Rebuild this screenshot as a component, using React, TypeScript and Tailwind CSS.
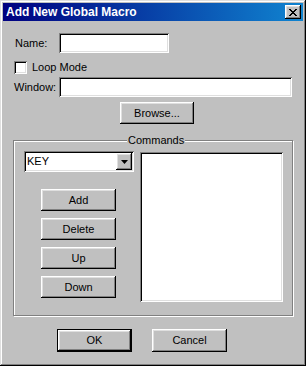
import React from "react";

const raised =
  "shadow-[inset_-1px_-1px_#000,inset_1px_1px_#fff,inset_-2px_-2px_#808080,inset_2px_2px_#dfdfdf]";
const sunken =
  "shadow-[inset_1px_1px_#808080,inset_-1px_-1px_#fff,inset_2px_2px_#000,inset_-2px_-2px_#dfdfdf]";

function Btn({ label, w = "w-[75px]", h = "h-[23px]", def = false }: { label: string; w?: string; h?: string; def?: boolean }) {
  if (def) {
    return (
      <div className={`${w} ${h} border border-black flex`}>
        <div className={`flex-1 bg-[#c0c0c0] flex items-center justify-center text-[11px] text-black ${raised}`}>{label}</div>
      </div>
    );
  }
  return (
    <div className={`${w} ${h} bg-[#c0c0c0] flex items-center justify-center text-[11px] text-black ${raised}`}>{label}</div>
  );
}

export default function App() {
  return (
    <div
      className="w-[306px] h-[366px] bg-[#c0c0c0] p-[3px] flex flex-col shadow-[inset_-1px_-1px_#000,inset_1px_1px_#dfdfdf,inset_-2px_-2px_#808080,inset_2px_2px_#fff]"
      style={{ fontFamily: '"Liberation Sans", Arial, sans-serif' }}
    >
      {/* Title bar */}
      <div className="h-[18px] bg-[linear-gradient(to_right,#000080,#1084d0)] flex items-center pl-[3px] pr-[2px]">
        <span className="text-white font-bold text-[12px] leading-none flex-1">Add New Global Macro</span>
        <div className={`w-[16px] h-[14px] bg-[#c0c0c0] flex items-center justify-center ${raised}`}>
          <svg width="8" height="7" viewBox="0 0 8 7">
            <path d="M0 0h2v1h1v1h2v-1h1v-1h2v1h-1v1h-1v1h-1v1h1v1h1v1h1v1h-2v-1h-1v-1h-2v1h-1v1h-2v-1h1v-1h1v-1h1v-1h-1v-1h-1v-1h-1z" fill="#000" />
          </svg>
        </div>
      </div>

      {/* Name */}
      <div className="flex items-center mt-[12px] pl-[12px] h-[20px]">
        <span className="w-[44px] text-[11px] text-black">Name:</span>
        <div className={`w-[110px] h-[20px] bg-white ${sunken}`} />
      </div>

      {/* Loop Mode */}
      <div className="flex items-center mt-[8px] pl-[11px] h-[13px]">
        <div className={`w-[13px] h-[13px] bg-white ${sunken}`} />
        <span className="ml-[5px] text-[11px] text-black">Loop Mode</span>
      </div>

      {/* Window */}
      <div className="flex items-center mt-[3px] pl-[11px] h-[20px]">
        <span className="w-[45px] text-[11px] text-black">Window:</span>
        <div className={`w-[233px] h-[20px] bg-white ${sunken}`} />
      </div>

      {/* Browse */}
      <div className="mt-[5px] pl-[117px]">
        <Btn label="Browse..." w="w-[74px]" h="h-[22px]" />
      </div>

      {/* Group box */}
      <div className="relative mt-[16px] ml-[10px] w-[280px] h-[176px] border border-[#808080] shadow-[inset_1px_1px_#fff,1px_1px_#fff] flex pt-[10px] pl-[10px]">
        <span className="absolute top-[-7px] left-[113px] bg-[#c0c0c0] px-[1px] text-[11px] leading-[13px] text-black">Commands</span>
        <div className="flex flex-col w-[110px]">
          <div className={`w-[110px] h-[21px] bg-white flex items-center pl-[3px] pr-[2px] ${sunken}`}>
            <span className="flex-1 text-[11px] text-black">KEY</span>
            <div className={`w-[16px] h-[17px] bg-[#c0c0c0] flex items-center justify-center ${raised}`}>
              <svg width="7" height="4" viewBox="0 0 7 4"><path d="M0 0h7L3.5 4z" fill="#000" /></svg>
            </div>
          </div>
          <div className="flex flex-col gap-[7px] mt-[17px] pl-[17px]">
            <Btn label="Add" h="h-[22px]" />
            <Btn label="Delete" h="h-[22px]" />
            <Btn label="Up" h="h-[22px]" />
            <Btn label="Down" h="h-[22px]" />
          </div>
        </div>
        <div className={`ml-[6px] mt-[1px] w-[143px] h-[150px] bg-white ${sunken}`} />
      </div>

      {/* OK / Cancel */}
      <div className="flex mt-[13px] pl-[54px] gap-[20px]">
        <Btn label="OK" def />
        <Btn label="Cancel" />
      </div>
    </div>
  );
}
